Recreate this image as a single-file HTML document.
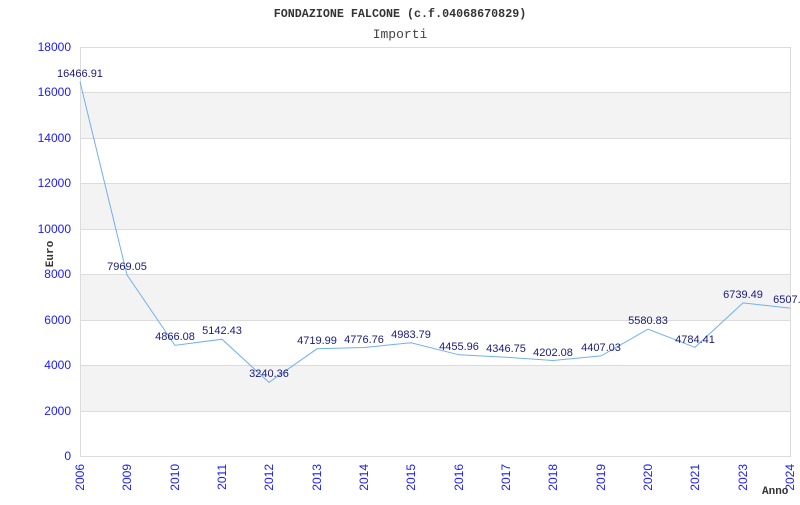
<!DOCTYPE html>
<html><head><style>html,body{margin:0;padding:0;background:#fff}</style></head>
<body>
<svg width="800" height="500" xmlns="http://www.w3.org/2000/svg" font-family="Liberation Sans, sans-serif">
<rect width="800" height="500" fill="#fff"/>
<g fill="#f3f3f3">
<rect x="80" y="92" width="710" height="46"/>
<rect x="80" y="183" width="710" height="46"/>
<rect x="80" y="274" width="710" height="46"/>
<rect x="80" y="365" width="710" height="46"/>
</g>
<g stroke="#dcdcdc" stroke-width="1">
<line x1="80" y1="47.5" x2="790" y2="47.5"/>
<line x1="80" y1="92.5" x2="790" y2="92.5"/>
<line x1="80" y1="138.5" x2="790" y2="138.5"/>
<line x1="80" y1="183.5" x2="790" y2="183.5"/>
<line x1="80" y1="229.5" x2="790" y2="229.5"/>
<line x1="80" y1="274.5" x2="790" y2="274.5"/>
<line x1="80" y1="320.5" x2="790" y2="320.5"/>
<line x1="80" y1="365.5" x2="790" y2="365.5"/>
<line x1="80" y1="411.5" x2="790" y2="411.5"/>
<line x1="80" y1="456.5" x2="790" y2="456.5"/>
<line x1="80.5" y1="47" x2="80.5" y2="457"/>
<line x1="790.5" y1="47" x2="790.5" y2="457"/>
</g>
<polyline fill="none" stroke="#70b0f0" stroke-width="1" points="80,81.8 127,274.9 175,345.4 222,339.2 269,382.4 317,348.8 364,347.5 411,342.8 459,354.8 506,357.2 553,360.5 601,355.9 648,329.2 695,347.3 743,302.9 790,308.1"/>
<g font-size="11" fill="#1a1a7a" text-anchor="middle">
<text x="80" y="77">16466.91</text>
<text x="127" y="270">7969.05</text>
<text x="175" y="340">4866.08</text>
<text x="222" y="334">5142.43</text>
<text x="269" y="377">3240.36</text>
<text x="317" y="344">4719.99</text>
<text x="364" y="343">4776.76</text>
<text x="411" y="338">4983.79</text>
<text x="459" y="350">4455.96</text>
<text x="506" y="352">4346.75</text>
<text x="553" y="356">4202.08</text>
<text x="601" y="351">4407.03</text>
<text x="648" y="324">5580.83</text>
<text x="695" y="343">4784.41</text>
<text x="743" y="298">6739.49</text>
<text x="790" y="303">6507.9</text>
</g>
<g font-size="12" fill="#1a1aff" text-anchor="end">
<text x="71" y="51">18000</text>
<text x="71" y="96">16000</text>
<text x="71" y="142">14000</text>
<text x="71" y="187">12000</text>
<text x="71" y="233">10000</text>
<text x="71" y="278">8000</text>
<text x="71" y="324">6000</text>
<text x="71" y="369">4000</text>
<text x="71" y="415">2000</text>
<text x="71" y="460">0</text>
</g>
<g font-size="12" fill="#1a1aff" text-anchor="end">
<text transform="translate(84,464) rotate(-90)">2006</text>
<text transform="translate(131,464) rotate(-90)">2009</text>
<text transform="translate(179,464) rotate(-90)">2010</text>
<text transform="translate(226,464) rotate(-90)">2011</text>
<text transform="translate(273,464) rotate(-90)">2012</text>
<text transform="translate(321,464) rotate(-90)">2013</text>
<text transform="translate(368,464) rotate(-90)">2014</text>
<text transform="translate(415,464) rotate(-90)">2015</text>
<text transform="translate(463,464) rotate(-90)">2016</text>
<text transform="translate(510,464) rotate(-90)">2017</text>
<text transform="translate(557,464) rotate(-90)">2018</text>
<text transform="translate(605,464) rotate(-90)">2019</text>
<text transform="translate(652,464) rotate(-90)">2020</text>
<text transform="translate(699,464) rotate(-90)">2021</text>
<text transform="translate(747,464) rotate(-90)">2023</text>
<text transform="translate(794,464) rotate(-90)">2024</text>
</g>
<text x="400" y="17" font-family="Liberation Mono, monospace" font-weight="bold" font-size="11.7" fill="#333" text-anchor="middle">FONDAZIONE FALCONE (c.f.04068670829)</text>
<text x="400" y="38" font-family="Liberation Mono, monospace" font-size="13" fill="#444" text-anchor="middle">Importi</text>
<text transform="translate(53,254) rotate(-90)" font-family="Liberation Mono, monospace" font-weight="bold" font-size="11" fill="#333" text-anchor="middle">Euro</text>
<text x="762" y="494" font-family="Liberation Mono, monospace" font-weight="bold" font-size="11" fill="#333">Anno</text>
</svg>
</body></html>
